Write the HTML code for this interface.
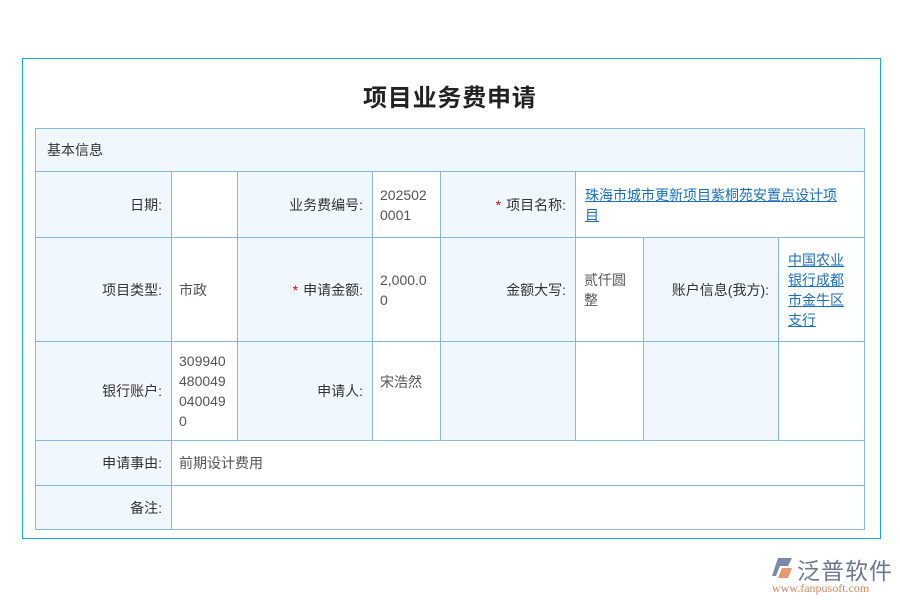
<!DOCTYPE html>
<html><head><meta charset="utf-8"><style>
body{margin:0;width:900px;height:600px;background:#fff;font-family:"Liberation Sans","Noto Sans CJK SC",sans-serif;font-size:14px;color:#333;position:relative;overflow:hidden}
.o{position:absolute;left:22px;top:58px;width:859px;height:481px;border:1px solid #1aa7e0;box-sizing:border-box}
.t{position:absolute;left:363px;top:78px;font-size:24px;font-weight:bold;color:#222;letter-spacing:0.8px}
.c{position:absolute;box-sizing:border-box;border:1px solid #85b7e3;display:flex;align-items:center;line-height:20px}
.l{background:#f1f7fe;justify-content:flex-end;padding-right:9px}
.v{background:#fff;padding:0 7px;color:#555;white-space:nowrap}
.a{color:#1a6fc4;text-decoration:underline}
.s{color:#e00;margin-right:5px}
</style></head><body>
<div class="o"></div>
<div class="t">项目业务费申请</div>
<div class="c" style="left:35px;top:128px;width:830px;height:44px;background:#f1f7fe;padding-left:11px">基本信息</div>

<div class="c l" style="left:35px;top:171px;width:137px;height:67px">日期:</div>
<div class="c v" style="left:171px;top:171px;width:67px;height:67px"></div>
<div class="c l" style="left:237px;top:171px;width:136px;height:67px">业务费编号:</div>
<div class="c v" style="left:372px;top:171px;width:69px;height:67px">202502<br>0001</div>
<div class="c l" style="left:440px;top:171px;width:136px;height:67px"><span class="s">*</span>项目名称:</div>
<div class="c v" style="left:575px;top:171px;width:290px;height:67px;padding-left:9px"><span class="a">珠海市城市更新项目紫桐苑安置点设计项<br>目</span></div>

<div class="c l" style="left:35px;top:237px;width:137px;height:105px">项目类型:</div>
<div class="c v" style="left:171px;top:237px;width:67px;height:105px">市政</div>
<div class="c l" style="left:237px;top:237px;width:136px;height:105px"><span class="s">*</span>申请金额:</div>
<div class="c v" style="left:372px;top:237px;width:69px;height:105px">2,000.0<br>0</div>
<div class="c l" style="left:440px;top:237px;width:136px;height:105px">金额大写:</div>
<div class="c v" style="left:575px;top:237px;width:69px;height:105px;padding-left:8px;align-items:flex-start;padding-top:32px">贰仟圆<br>整</div>
<div class="c l" style="left:643px;top:237px;width:136px;height:105px">账户信息(我方):</div>
<div class="c v" style="left:778px;top:237px;width:87px;height:105px;padding-left:9px"><span class="a">中国农业<br>银行成都<br>市金牛区<br>支行</span></div>

<div class="c l" style="left:35px;top:341px;width:137px;height:100px">银行账户:</div>
<div class="c v" style="left:171px;top:341px;width:67px;height:100px">309940<br>480049<br>040049<br>0</div>
<div class="c l" style="left:237px;top:341px;width:136px;height:100px">申请人:</div>
<div class="c v" style="left:372px;top:341px;width:69px;height:100px;align-items:flex-start;padding-top:30px">宋浩然</div>
<div class="c l" style="left:440px;top:341px;width:136px;height:100px"></div>
<div class="c v" style="left:575px;top:341px;width:69px;height:100px"></div>
<div class="c l" style="left:643px;top:341px;width:136px;height:100px"></div>
<div class="c v" style="left:778px;top:341px;width:87px;height:100px"></div>

<div class="c l" style="left:35px;top:440px;width:137px;height:46px">申请事由:</div>
<div class="c v" style="left:171px;top:440px;width:694px;height:46px">前期设计费用</div>
<div class="c l" style="left:35px;top:485px;width:137px;height:45px">备注:</div>
<div class="c v" style="left:171px;top:485px;width:694px;height:45px"></div>

<svg style="position:absolute;left:770px;top:556px" width="26" height="24" viewBox="0 0 26 24"><path d="M8 2L22 2L18 10L10 10L6 20L2 20Z" fill="#7a8aa8"/><path d="M12 12L22 12L18 22L8 22Z" fill="#e79a6f"/></svg>
<div style="position:absolute;left:797px;top:552px;font-size:23px;color:#6b7896;letter-spacing:1px">泛普软件</div>
<div style="position:absolute;left:772px;top:581px;font-size:12px;color:#d88660;font-family:'Liberation Serif',serif">www.fanpusoft.com</div>
</body></html>
